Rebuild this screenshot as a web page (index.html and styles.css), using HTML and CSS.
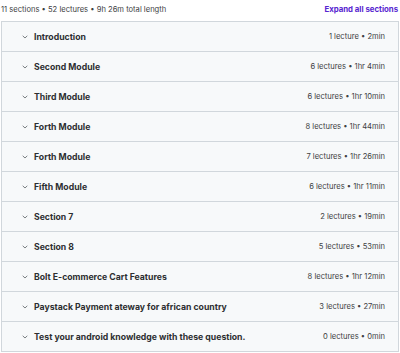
FILE: index.html
```html
<!DOCTYPE html>
<html>
<head>
<meta charset="utf-8">
<link rel="stylesheet" href="styles.css">
</head>
<body>
<div class="page">
  <div class="top">
    <span class="summary">11 sections • 52 lectures • 9h 26m total length</span>
    <span class="expand">Expand all sections</span>
  </div>
  <div class="list">
    <div class="row"><span class="chev"><svg width="6" height="4" viewBox="0 0 6 4"><path d="M0.7 0.8l2.3 2.2 2.3-2.2" fill="none" stroke="#6a6f73" stroke-width="0.9"/></svg></span><span class="title">Introduction</span><span class="meta">1 lecture • 2min</span></div>
    <div class="row"><span class="chev"><svg width="6" height="4" viewBox="0 0 6 4"><path d="M0.7 0.8l2.3 2.2 2.3-2.2" fill="none" stroke="#6a6f73" stroke-width="0.9"/></svg></span><span class="title">Second Module</span><span class="meta">6 lectures • 1hr 4min</span></div>
    <div class="row"><span class="chev"><svg width="6" height="4" viewBox="0 0 6 4"><path d="M0.7 0.8l2.3 2.2 2.3-2.2" fill="none" stroke="#6a6f73" stroke-width="0.9"/></svg></span><span class="title">Third Module</span><span class="meta">6 lectures • 1hr 10min</span></div>
    <div class="row"><span class="chev"><svg width="6" height="4" viewBox="0 0 6 4"><path d="M0.7 0.8l2.3 2.2 2.3-2.2" fill="none" stroke="#6a6f73" stroke-width="0.9"/></svg></span><span class="title">Forth Module</span><span class="meta">8 lectures • 1hr 44min</span></div>
    <div class="row"><span class="chev"><svg width="6" height="4" viewBox="0 0 6 4"><path d="M0.7 0.8l2.3 2.2 2.3-2.2" fill="none" stroke="#6a6f73" stroke-width="0.9"/></svg></span><span class="title">Forth Module</span><span class="meta">7 lectures • 1hr 26min</span></div>
    <div class="row"><span class="chev"><svg width="6" height="4" viewBox="0 0 6 4"><path d="M0.7 0.8l2.3 2.2 2.3-2.2" fill="none" stroke="#6a6f73" stroke-width="0.9"/></svg></span><span class="title">Fifth Module</span><span class="meta">6 lectures • 1hr 11min</span></div>
    <div class="row"><span class="chev"><svg width="6" height="4" viewBox="0 0 6 4"><path d="M0.7 0.8l2.3 2.2 2.3-2.2" fill="none" stroke="#6a6f73" stroke-width="0.9"/></svg></span><span class="title">Section 7</span><span class="meta">2 lectures • 19min</span></div>
    <div class="row"><span class="chev"><svg width="6" height="4" viewBox="0 0 6 4"><path d="M0.7 0.8l2.3 2.2 2.3-2.2" fill="none" stroke="#6a6f73" stroke-width="0.9"/></svg></span><span class="title">Section 8</span><span class="meta">5 lectures • 53min</span></div>
    <div class="row"><span class="chev"><svg width="6" height="4" viewBox="0 0 6 4"><path d="M0.7 0.8l2.3 2.2 2.3-2.2" fill="none" stroke="#6a6f73" stroke-width="0.9"/></svg></span><span class="title">Bolt E-commerce Cart Features</span><span class="meta">8 lectures • 1hr 12min</span></div>
    <div class="row"><span class="chev"><svg width="6" height="4" viewBox="0 0 6 4"><path d="M0.7 0.8l2.3 2.2 2.3-2.2" fill="none" stroke="#6a6f73" stroke-width="0.9"/></svg></span><span class="title">Paystack Payment ateway for african country</span><span class="meta">3 lectures • 27min</span></div>
    <div class="row"><span class="chev"><svg width="6" height="4" viewBox="0 0 6 4"><path d="M0.7 0.8l2.3 2.2 2.3-2.2" fill="none" stroke="#6a6f73" stroke-width="0.9"/></svg></span><span class="title">Test your android knowledge with these question.</span><span class="meta">0 lectures • 0min</span></div>
  </div>
</div>
</body>
</html>
```
FILE: styles.css
```css
* { box-sizing: border-box; }
body {
  margin: 0;
  background: #fff;
  font-family: Inter, "Noto Sans", sans-serif;
  color: #2d2f31;
}
.page {
  width: 400px;
  padding: 0 1px;
}
.top {
  display: flex;
  justify-content: space-between;
  align-items: center;
  height: 21px;
  padding: 0 1px 3px 0;
}
.summary {
  font-size: 7.6px;
  color: #3e4143;
}
.expand {
  font-size: 7.8px;
  font-weight: 700;
  color: #5624d0;
}
.list {
  border: 1px solid #d1d7dc;
}
.row {
  display: flex;
  align-items: center;
  height: 30px;
  background: #f7f9fa;
  border-top: 1px solid #d1d7dc;
  padding: 0 13px 0 20px;
}
.row:first-child { border-top: none; height: 29px; }
.chev {
  width: 12px;
  display: flex;
  align-items: center;
}
.title {
  flex: 1;
  font-size: 8.7px;
  font-weight: 700;
  color: #2d2f31;
  white-space: nowrap;
}
.meta {
  font-size: 7.6px;
  color: #3e4143;
  white-space: nowrap;
}
```
